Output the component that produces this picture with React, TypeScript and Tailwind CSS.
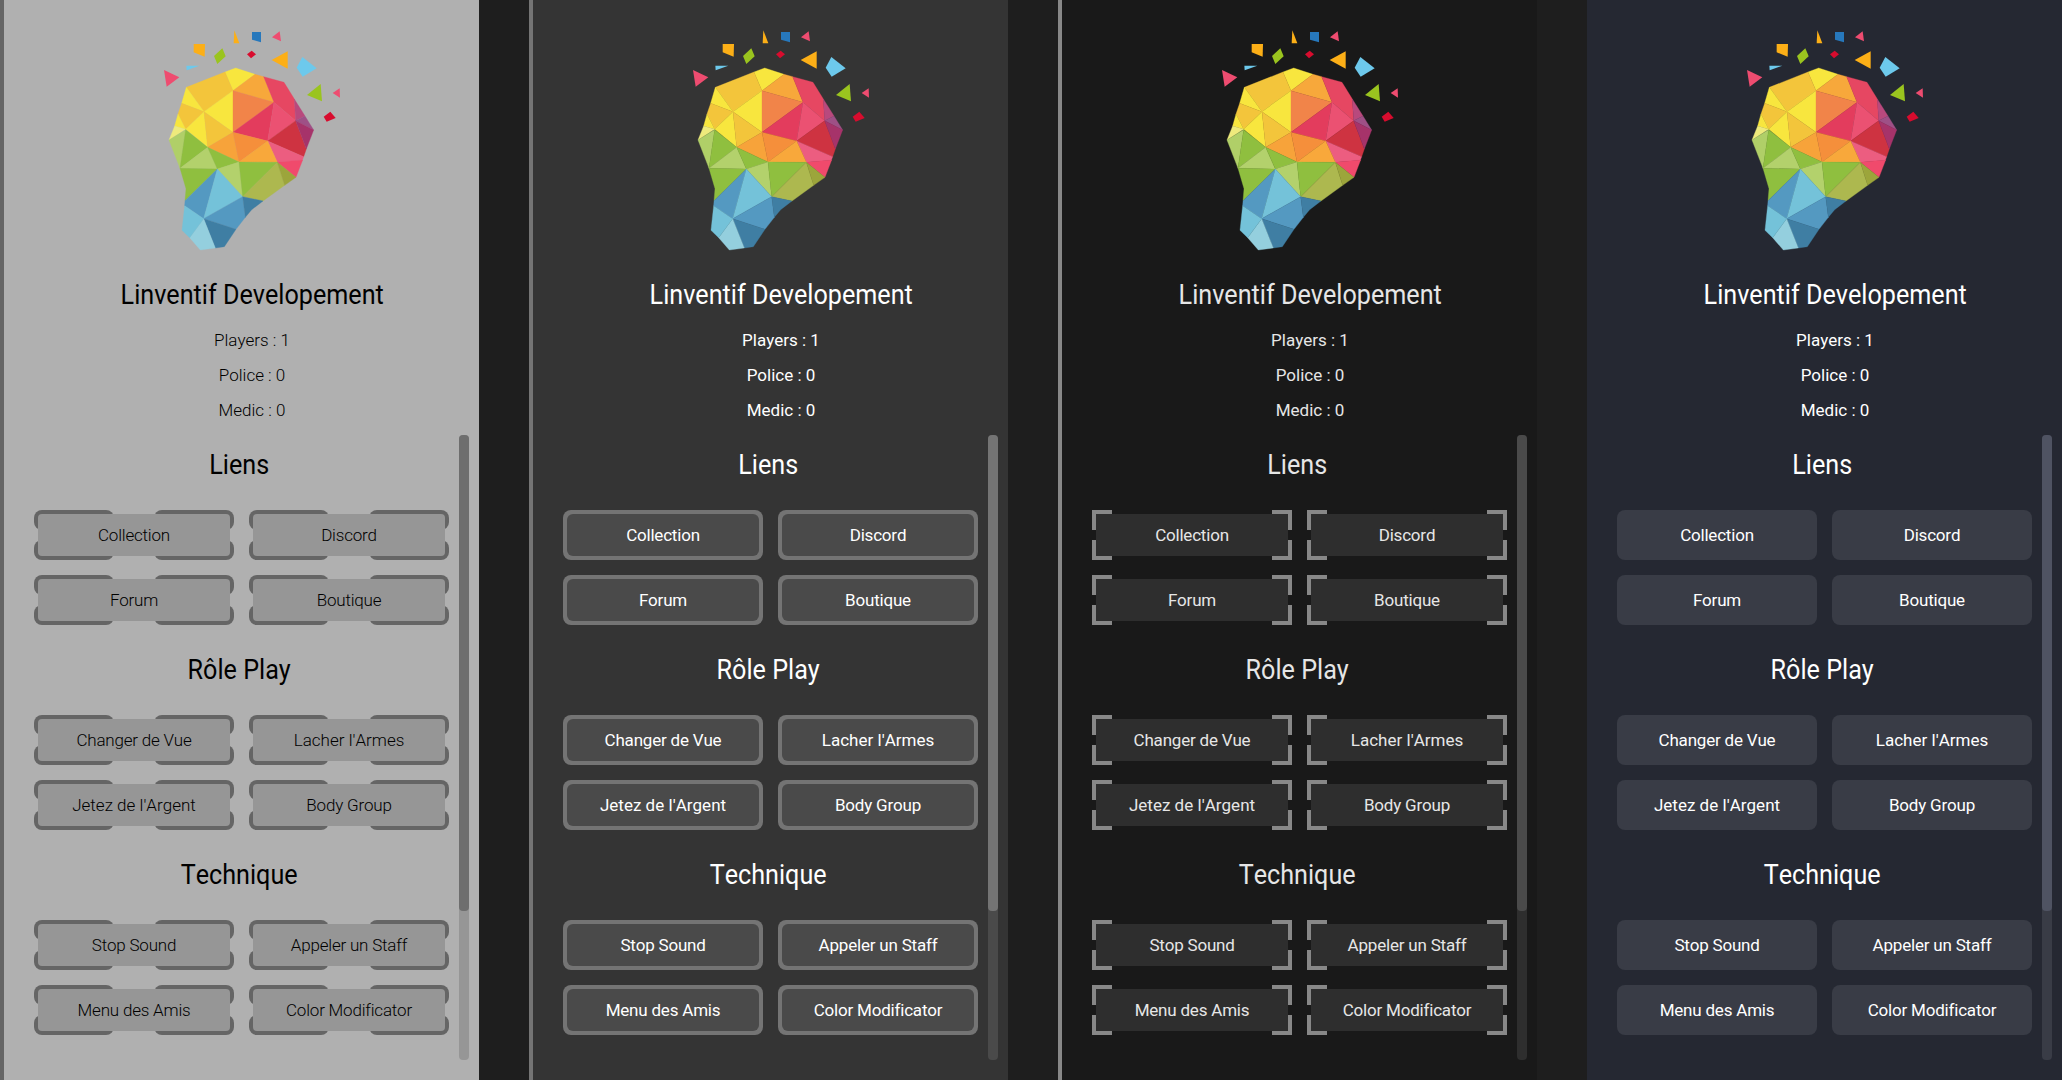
type Variant = "notched" | "outlined" | "corners" | "flat";

interface Theme {
  variant: Variant;
  panel: string;
  text: string;
  fill: string;
  edge: string;
  track: string;
  thumb: string;
}

const themes: Theme[] = [
  {
    variant: "notched",
    panel: "w-[479px] border-l-4 border-[#656565] bg-[#b0b0b0]",
    text: "text-black font-[350]",
    fill: "bg-[#969696] rounded",
    edge: "bg-[#656565]",
    track: "bg-[#969696]",
    thumb: "bg-[#6e6e6e]",
  },
  {
    variant: "outlined",
    panel: "w-[479px] border-l-4 border-[#747474] bg-[#343434]",
    text: "text-white",
    fill: "bg-[#4a4a4a] rounded-md",
    edge: "bg-[#747474]",
    track: "bg-[#4a4a4a]",
    thumb: "bg-[#747474]",
  },
  {
    variant: "corners",
    panel: "w-[479px] border-l-4 border-[#888888] bg-[#191919]",
    text: "text-[#e6e6e6]",
    fill: "bg-[#2e2e2e]",
    edge: "bg-[#888888]",
    track: "bg-[#2e2e2e]",
    thumb: "bg-[#4a4a4a]",
  },
  {
    variant: "flat",
    panel: "w-[475px] bg-[#252832]",
    text: "text-white",
    fill: "bg-[#393c46]",
    edge: "",
    track: "bg-[#393c46]",
    thumb: "bg-[#4f5362]",
  },
];

const stats = ["Players : 1", "Police : 0", "Medic : 0"];

const sections = [
  { title: "Liens", items: ["Collection", "Discord", "Forum", "Boutique"] },
  { title: "Rôle Play", items: ["Changer de Vue", "Lacher l'Armes", "Jetez de l'Argent", "Body Group"] },
  { title: "Technique", items: ["Stop Sound", "Appeler un Staff", "Menu des Amis", "Color Modificator"] },
];

const facets: [string, string][] = [
  ["225,156 257,144 315,163 249,212", "#f8e63e"],
  ["109,202 225,156 249,212 162,275", "#f3c53b"],
  ["109,202 162,275 95,250", "#f8e63e"],
  ["95,250 162,275 107,328 84,282", "#f3c53b"],
  ["84,282 107,328 74,318", "#f8e63e"],
  ["74,318 107,328 57,360", "#eeea7c"],
  ["162,275 249,212 249,337", "#f8e63e"],
  ["162,275 107,328 173,382", "#f8e63e"],
  ["162,275 249,337 173,382", "#f3c53b"],
  ["249,212 315,163 341,170 372,247", "#f7a83b"],
  ["249,212 372,247 249,337", "#f18449"],
  ["249,337 372,247 353,363", "#e33c5d"],
  ["341,170 402,187 433,237 437,302 372,247", "#e64762"],
  ["372,247 437,302 353,363", "#eb5172"],
  ["353,363 437,302 469,387 461,410", "#ce3341"],
  ["433,237 465,288 437,302", "#b8497d"],
  ["465,288 491,330 437,302", "#9e5086"],
  ["437,302 491,330 469,387", "#a6336a"],
  ["353,363 461,410 457,421 382,427", "#ec5d80"],
  ["382,427 458,420 438,472", "#f04a6c"],
  ["173,382 249,337 267,426", "#f7a33a"],
  ["249,337 353,363 267,426", "#f58f3b"],
  ["267,426 353,363 382,427", "#f8a83b"],
  ["57,360 107,329 90,445", "#b0cf68"],
  ["107,329 173,382 90,445", "#8fbf3f"],
  ["90,445 173,382 202,447", "#b3d16c"],
  ["173,382 267,426 202,447", "#8fbf3f"],
  ["202,447 267,426 278,530", "#b3d16c"],
  ["267,426 382,427 278,530", "#8fbf3f"],
  ["90,445 202,447 105,542 108,506", "#8fbf3f"],
  ["382,427 404,496 339,543 278,530", "#adb84f"],
  ["382,427 438,472 404,496", "#9ca53b"],
  ["202,447 161,596 104,557 105,542", "#5499c1"],
  ["202,447 278,530 161,596", "#74c2d9"],
  ["278,530 286,592 258,628 161,596", "#5499c1"],
  ["278,530 339,543 305,569 286,592", "#3f7ea3"],
  ["161,596 258,628 223,680 196,684", "#3f7ea3"],
  ["161,596 196,684 151,690 119,653", "#94cfde"],
  ["104,557 161,596 119,653 96,631", "#74c2d9"],
];

const shards: [string, string][] = [
  ["42,150 88,172 50,200", "#ee4c70"],
  ["109,137 148,137 110,151", "#6dc9ec"],
  ["131,72 165,72 164,110 131,97", "#fcaf17"],
  ["217,85 227,109 202,132 192,108", "#9ac41f"],
  ["253,31 268,70 251,70", "#fcaf17"],
  ["306,36 333,36 333,67 306,59", "#2778bc"],
  ["389,34 393,64 366,52", "#ee4c70"],
  ["305,92 318,103 303,115 291,103", "#d80c2e"],
  ["413,94 413,146 365,120", "#fcaf17"],
  ["457,111 500,145 458,170 440,143", "#6dc9ec"],
  ["512,192 516,244 471,225", "#9ac41f"],
  ["569,205 570,233 548,219", "#ee4c70"],
  ["541,275 557,294 530,305 521,290", "#d80c2e"],
];

function Brain() {
  return (
    <svg className="mt-5 ml-[146px] h-[235px] w-[200px] shrink-0" viewBox="0 0 600 705" aria-hidden="true">
      {facets.map(([points, color]) => (
        <polygon key={points} points={points} fill={color} stroke={color} strokeWidth="1" />
      ))}
      {shards.map(([points, color]) => (
        <polygon key={points} points={points} fill={color} />
      ))}
    </svg>
  );
}

function Edge({ theme }: { theme: Theme }) {
  if (theme.variant === "outlined") return <span className={`absolute inset-0 rounded-lg ${theme.edge}`} />;
  if (theme.variant === "flat") return null;
  const piece = `absolute h-5 ${theme.variant === "notched" ? "w-20 rounded-lg" : "w-5"} ${theme.edge}`;
  return (
    <>
      <span className={`${piece} top-0 left-0`} />
      <span className={`${piece} top-0 right-0`} />
      <span className={`${piece} bottom-0 left-0`} />
      <span className={`${piece} right-0 bottom-0`} />
    </>
  );
}

function ActionButton({ label, theme }: { label: string; theme: Theme }) {
  const inset = theme.variant === "flat" ? "inset-0 rounded-lg" : "inset-1";
  const tracking = label.includes("'") ? "tracking-[0.02px]" : "tracking-[-0.2px]";
  return (
    <button className={`relative flex h-[50px] items-center justify-center text-[17px] leading-5 ${tracking}`}>
      <Edge theme={theme} />
      <span className={`absolute ${inset} ${theme.fill}`} />
      <span className="relative whitespace-nowrap">{label}</span>
    </button>
  );
}

function Panel({ theme }: { theme: Theme }) {
  return (
    <section className={`flex h-full shrink-0 flex-col ${theme.panel} ${theme.text}`}>
      <header className="flex h-[435px] shrink-0 flex-col">
        <Brain />
        <div className="ml-[21px] flex flex-col items-center">
          <h1 className="mt-[22px] scale-x-[0.932] text-[27px] leading-9 font-normal whitespace-nowrap">
            Linventif Developement
          </h1>
          <div className="mt-[10px] text-center text-[17px] leading-[35px]">
            {stats.map((s) => (
              <p key={s}>{s}</p>
            ))}
          </div>
        </div>
      </header>
      <div className="flex h-[625px] shrink-0">
        <div className="ml-[30px] w-[415px]">
          {sections.map((s) => (
            <div key={s.title} className="h-[205px]">
              <h2 className="h-[75px] scale-x-[0.932] pt-[12px] pr-[5px] text-center text-[27px] leading-9 font-normal">
                {s.title}
              </h2>
              <div className="grid grid-cols-2 gap-[15px]">
                {s.items.map((label) => (
                  <ActionButton key={label} label={label} theme={theme} />
                ))}
              </div>
            </div>
          ))}
        </div>
        <div className={`ml-[10px] h-full w-[10px] rounded ${theme.track}`}>
          <div className={`h-[476px] w-full rounded ${theme.thumb}`} />
        </div>
      </div>
    </section>
  );
}

export default function App() {
  return (
    <main className="flex h-[1080px] w-[2062px] gap-[50px] overflow-hidden bg-[#1e1e1e] font-['Roboto',sans-serif] [font-kerning:none]">
      {themes.map((theme) => (
        <Panel key={theme.variant} theme={theme} />
      ))}
    </main>
  );
}
